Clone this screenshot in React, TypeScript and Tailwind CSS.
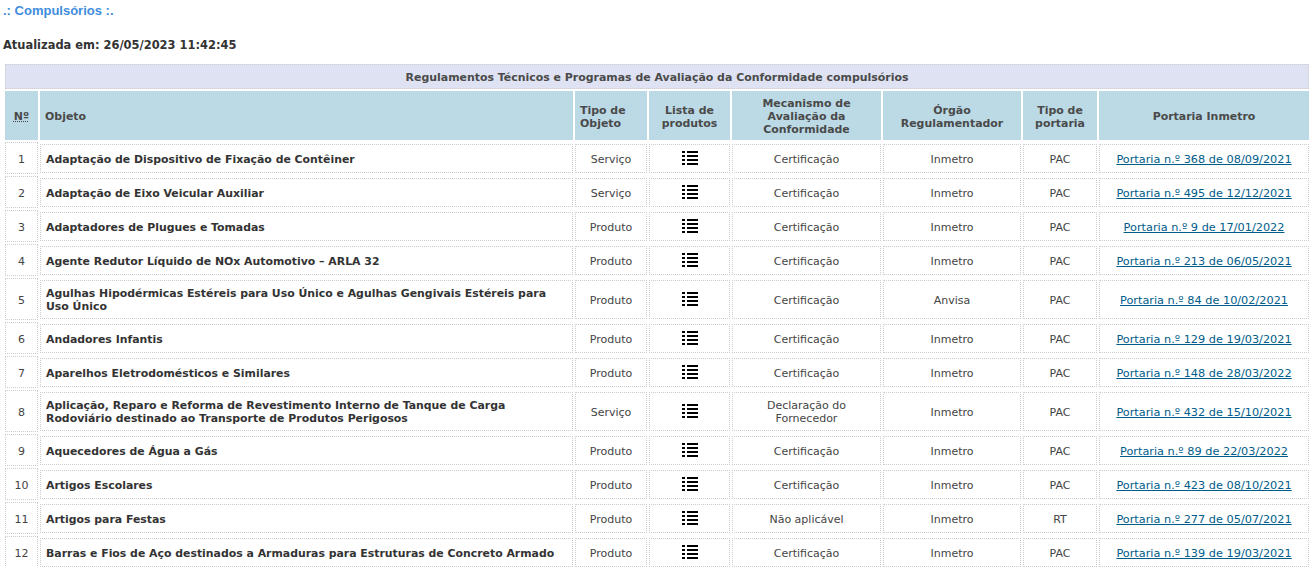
const rows = [
  ["Adaptação de Dispositivo de Fixação de Contêiner", "Serviço", "Certificação", "Inmetro", "PAC", "Portaria n.º 368 de 08/09/2021"],
  ["Adaptação de Eixo Veicular Auxiliar", "Serviço", "Certificação", "Inmetro", "PAC", "Portaria n.º 495 de 12/12/2021"],
  ["Adaptadores de Plugues e Tomadas", "Produto", "Certificação", "Inmetro", "PAC", "Portaria n.º 9 de 17/01/2022"],
  ["Agente Redutor Líquido de NOx Automotivo – ARLA 32", "Produto", "Certificação", "Inmetro", "PAC", "Portaria n.º 213 de 06/05/2021"],
  ["Agulhas Hipodérmicas Estéreis para Uso Único e Agulhas Gengivais Estéreis para Uso Único", "Produto", "Certificação", "Anvisa", "PAC", "Portaria n.º 84 de 10/02/2021"],
  ["Andadores Infantis", "Produto", "Certificação", "Inmetro", "PAC", "Portaria n.º 129 de 19/03/2021"],
  ["Aparelhos Eletrodomésticos e Similares", "Produto", "Certificação", "Inmetro", "PAC", "Portaria n.º 148 de 28/03/2022"],
  ["Aplicação, Reparo e Reforma de Revestimento Interno de Tanque de Carga Rodoviário destinado ao Transporte de Produtos Perigosos", "Serviço", "Declaração do Fornecedor", "Inmetro", "PAC", "Portaria n.º 432 de 15/10/2021"],
  ["Aquecedores de Água a Gás", "Produto", "Certificação", "Inmetro", "PAC", "Portaria n.º 89 de 22/03/2022"],
  ["Artigos Escolares", "Produto", "Certificação", "Inmetro", "PAC", "Portaria n.º 423 de 08/10/2021"],
  ["Artigos para Festas", "Produto", "Não aplicável", "Inmetro", "RT", "Portaria n.º 277 de 05/07/2021"],
  ["Barras e Fios de Aço destinados a Armaduras para Estruturas de Concreto Armado", "Produto", "Certificação", "Inmetro", "PAC", "Portaria n.º 139 de 19/03/2021"],
];

function ListIcon() {
  return (
    <svg width="16" height="14" viewBox="0 0 16 14" className="block" fill="#000">
      {[0, 4, 8, 12].map((y) => (
        <g key={y}>
          <rect x="0" y={y} width="3" height="2" />
          <rect x="5" y={y} width="11" height="2" />
        </g>
      ))}
    </svg>
  );
}

const th = "bg-[#bcdae6] text-[#4a4a4a] font-bold text-center align-middle px-1 pt-[2px] leading-[13px] text-[10.95px]";
const tdOuter = "p-0 pt-[2px] pb-[3px] h-[1px]";
const box = "h-full border border-dotted border-[#cccccc] flex items-center justify-center text-center px-1 pt-[6px] pb-[5px] leading-[13px] text-[#444]";

export default function App() {
  return (
    <div className="bg-white h-[567px] overflow-hidden font-['DejaVu_Sans',sans-serif] text-[11px]">
      <h2 className="pl-[3px] pt-[4px] font-['Liberation_Sans',sans-serif] text-[13px] font-bold text-[#3f8ddc] leading-[14px]">.: Compulsórios :.</h2>
      <p className="mt-[21px] pl-[3px] text-[11.45px] font-bold text-[#333] leading-[13px]">Atualizada em: 26/05/2023 11:42:45</p>
      <table className="mt-[12px] ml-[3px] w-[1308px] table-fixed border-separate border-spacing-x-[2px] border-spacing-y-0">
        <colgroup>
          <col className="w-[33px]" />
          <col className="w-[533px]" />
          <col className="w-[72px]" />
          <col className="w-[81px]" />
          <col className="w-[149px]" />
          <col className="w-[138px]" />
          <col className="w-[74px]" />
          <col className="w-[210px]" />
        </colgroup>
        <thead>
          <tr>
            <th colSpan={8} className="h-[25px] pt-[3px] bg-[#dee2f2] border border-dotted border-[#cccccc] text-[#4a4a4a] text-[10.95px] font-bold text-center">
              Regulamentos Técnicos e Programas de Avaliação da Conformidade compulsórios
            </th>
          </tr>
          <tr><th colSpan={8} className="h-[2px] p-0"></th></tr>
          <tr>
            <th className={`${th} h-[49px]`}><abbr className="underline decoration-dotted">Nº</abbr></th>
            <th className={`${th} !text-left !pl-[5px]`}>Objeto</th>
            <th className={`${th} !text-left !pl-[5px]`}>Tipo de<br />Objeto</th>
            <th className={th}>Lista de<br />produtos</th>
            <th className={th}>Mecanismo de<br />Avaliação da<br />Conformidade</th>
            <th className={th}>Órgão<br />Regulamentador</th>
            <th className={th}>Tipo de<br />portaria</th>
            <th className={th}>Portaria Inmetro</th>
          </tr>
          <tr><th colSpan={8} className="h-[2px] p-0"></th></tr>
        </thead>
        <tbody>
          {rows.map((r, i) => (
            <tr key={r[0]}>
              <td className="p-0 pb-[2px] h-[1px]"><div className={`${box} !pt-[8px] !pb-[5px]`}>{i + 1}</div></td>
              <td className={tdOuter}><div className="h-full border border-dotted border-[#cccccc] px-[5px] pt-[6px] pb-[5px] leading-[13px] text-[10.9px] font-bold text-[#333] flex items-center">{r[0]}</div></td>
              <td className={tdOuter}><div className={box}>{r[1]}</div></td>
              <td className={tdOuter}><div className={`${box} !pt-0 !pb-[1px] min-h-[29px]`}><ListIcon /></div></td>
              <td className={tdOuter}><div className={box}>{r[2]}</div></td>
              <td className={tdOuter}><div className={box}>{r[3]}</div></td>
              <td className={tdOuter}><div className={box}>{r[4]}</div></td>
              <td className={tdOuter}><div className={box}><a className="text-[#005c8a] underline text-[11.3px]">{r[5]}</a></div></td>
            </tr>
          ))}
        </tbody>
      </table>
    </div>
  );
}
